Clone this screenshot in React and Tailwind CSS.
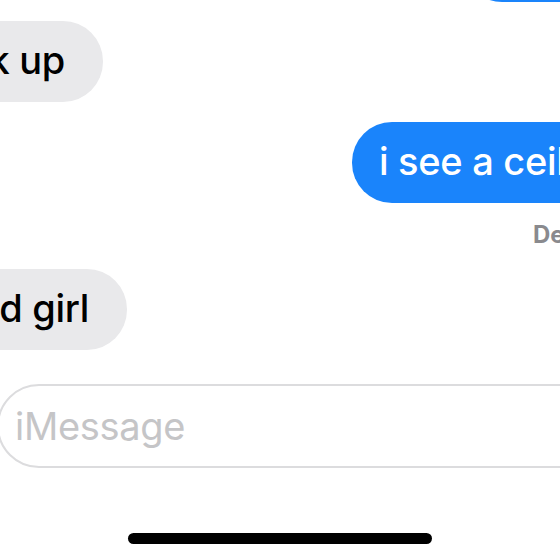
import React from "react";

function Received({ text, width, shift }) {
  return (
    <div
      className={`h-[81px] rounded-[40px] bg-[#e9e9eb] pt-[16px] pr-[38px] flex justify-end whitespace-nowrap text-black ${width} ${shift}`}
    >
      {text}
    </div>
  );
}

export default function App() {
  return (
    <div
      className="w-[560px] h-[560px] overflow-hidden bg-white flex flex-col items-start text-[38px] leading-[46px] font-medium tracking-[-0.3px]"
      style={{ fontFamily: "Inter, 'Noto Sans', sans-serif" }}
    >
      {/* tail of the previous sent bubble */}
      <div className="self-end -mt-[79px] -mr-[100px] w-[198px] h-[81px] rounded-[40px] bg-[#1a84fb] shrink-0" />

      <div className="mt-[19px]">
        <Received text="look up" width="w-[230px]" shift="-ml-[127px]" />
      </div>

      <div className="mt-[20px] ml-[352px] h-[81px] rounded-l-[40px] bg-[#1a84fb] pt-[16px] pl-[27px] pr-[40px] whitespace-nowrap text-white">
        i see a ceiling
      </div>

      <div className="mt-[18px] ml-[533px] text-[24px] leading-[28px] font-bold text-[#8a8a8e] whitespace-nowrap tracking-normal">
        Delivered
      </div>

      <div className="mt-[20px]">
        <Received text="good girl" width="w-[250px]" shift="-ml-[123px]" />
      </div>

      <div className="mt-[34px] -ml-[3px] w-[620px] h-[84px] rounded-[42px] border-2 border-[#dcdcde] pt-[17px] pl-[16px] text-[#c5c5c7] font-normal whitespace-nowrap">
        iMessage
      </div>

      <div className="mt-[65px] self-center w-[304px] h-[11px] rounded-full bg-black" />
    </div>
  );
}
